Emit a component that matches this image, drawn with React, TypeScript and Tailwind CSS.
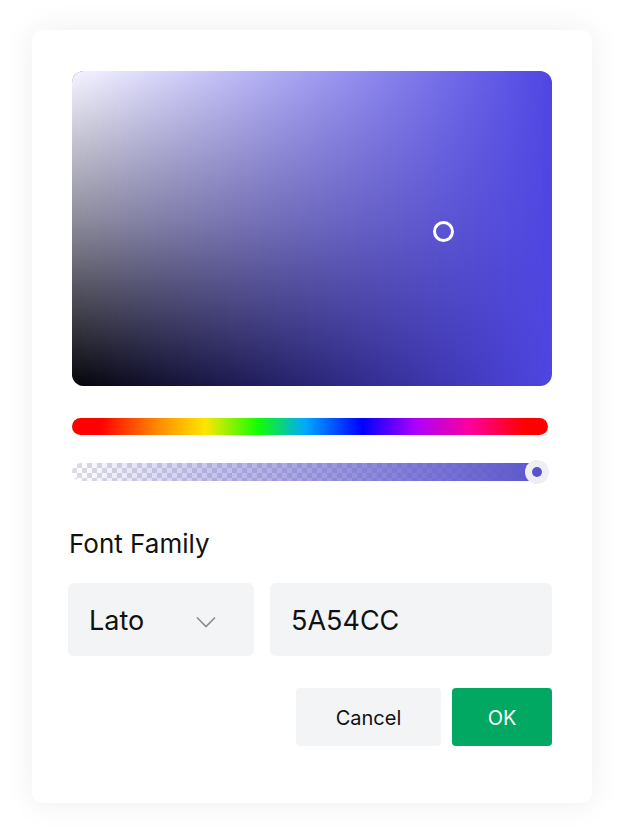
import React from "react";

export default function App() {
  return (
    <div className="min-h-[839px] w-[624px] bg-white pt-[30px] pl-[32px] font-['Inter',sans-serif]">
      <div className="w-[560px] h-[773px] rounded-[10px] bg-white shadow-[0_0_32px_rgba(0,0,0,0.07)] px-[40px] pt-[41px] flex flex-col">
        {/* Saturation / value area */}
        <div className="relative h-[315px] w-[480px] rounded-[12px] overflow-hidden bg-[#4f46e3]">
          <div className="absolute inset-0 bg-[linear-gradient(to_bottom,#f6f5ff_0%,#8c8b99_48%,#050509_100%)] [mask-image:linear-gradient(to_right,#000_0%,rgba(0,0,0,0)_100%)]" />
          <div className="absolute left-[361px] top-[150px] h-[21px] w-[21px] rounded-full border-[3px] border-white" />
        </div>

        {/* Hue bar */}
        <div className="mt-[32px] h-[17px] w-[476px] rounded-full bg-[linear-gradient(to_right,#ff0000_0%,#ff0000_6%,#ff8a00_18%,#ffe600_28%,#12ff00_39%,#00a8ff_49%,#0000ff_61%,#aa00ff_72%,#ff0098_84%,#ff0000_95%,#ff0000_100%)]" />

        {/* Alpha bar */}
        <div className="relative mt-[28px] h-[18px] w-[476px]">
          <div className="absolute inset-0 rounded-full overflow-hidden bg-[repeating-conic-gradient(#dcdce2_0%_25%,#ffffff_0%_50%)] bg-[length:10px_10px]">
            <div className="absolute inset-0 bg-[linear-gradient(to_right,rgba(90,84,204,0)_0%,rgba(90,84,204,0.35)_30%,rgba(90,84,204,0.75)_70%,#5a54cc_100%)]" />
          </div>
          <div className="absolute right-[-1px] top-[-3px] h-[24px] w-[24px] rounded-full bg-[#efeff3] flex items-center justify-center">
            <div className="h-[10px] w-[10px] rounded-full bg-[#5a54cc]" />
          </div>
        </div>

        {/* Label */}
        <div className="mt-[47px] ml-[-3px] text-[26px] leading-[32px] text-[#111]">
          Font Family
        </div>

        {/* Inputs */}
        <div className="mt-[23px] ml-[-4px] flex gap-[16px]">
          <div className="h-[73px] w-[186px] rounded-[6px] bg-[#f3f4f6] flex items-center pt-[3px] pl-[21px] pr-[38px] justify-between">
            <span className="text-[27px] text-[#111]">Lato</span>
            <svg width="20" height="12" viewBox="0 0 20 12" fill="none" className="mt-[2px]">
              <path d="M1 1.5 L10 10.5 L19 1.5" stroke="#8a8a8a" strokeWidth="1.6" />
            </svg>
          </div>
          <div className="h-[73px] w-[282px] rounded-[6px] bg-[#f3f4f6] flex items-center pt-[3px] pl-[21px]">
            <span className="text-[27px] text-[#111]">5A54CC</span>
          </div>
        </div>

        {/* Buttons */}
        <div className="mt-[32px] flex justify-end gap-[11px]">
          <button className="h-[58px] w-[145px] rounded-[4px] bg-[#f3f4f6] text-[20px] text-[#111] pt-[2px]">
            Cancel
          </button>
          <button className="h-[58px] w-[100px] rounded-[4px] bg-[#00a862] text-[20px] text-white pt-[2px]">
            OK
          </button>
        </div>
      </div>
    </div>
  );
}
